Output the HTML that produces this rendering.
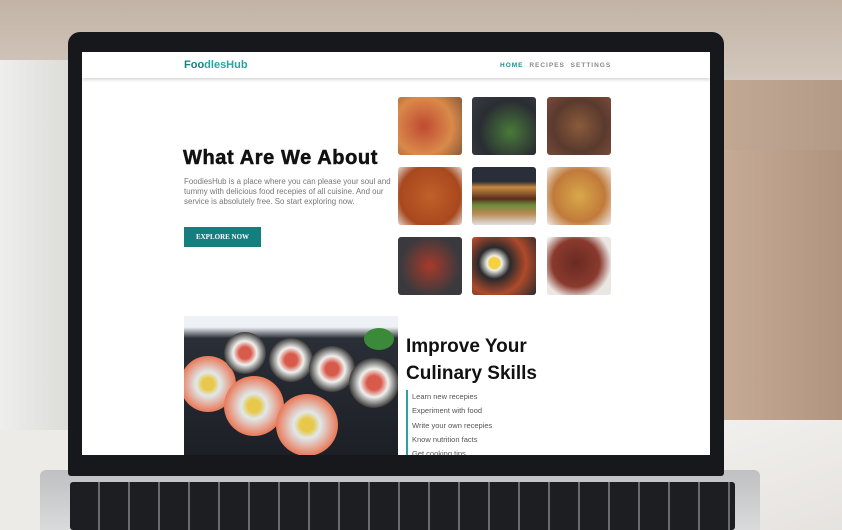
<!DOCTYPE html>
<html><head><style>
*{margin:0;padding:0;box-sizing:border-box}
body{width:842px;height:530px;overflow:hidden;position:relative;font-family:"Liberation Sans",sans-serif;
background:linear-gradient(90deg,#e4e2de 0%,#d8d4cf 8%,#cfc3b6 30%,#c9b8a6 60%,#c2a994 85%,#b39a87 100%);}
.abs{position:absolute}
.img{position:absolute;border-radius:3px;width:64px;height:58px}
</style></head><body>
<div class="abs" style="left:0;top:0;width:842px;height:80px;background:linear-gradient(180deg,#c2b3a5,#d3c8bd)"></div>
<div class="abs" style="left:0;top:60px;width:80px;height:420px;background:linear-gradient(90deg,#eeeeec,#d9d9d6)"></div>
<div class="abs" style="left:720px;top:150px;width:122px;height:300px;background:linear-gradient(90deg,#c6ab97,#b0947f)"></div>
<div class="abs" style="left:700px;top:420px;width:142px;height:110px;background:linear-gradient(160deg,#f2f0ee,#e6e3df)"></div>
<div class="abs" style="left:0;top:430px;width:100px;height:100px;background:#ecebe8"></div>
<!-- base -->
<div class="abs" style="left:40px;top:470px;width:720px;height:60px;background:linear-gradient(180deg,#bfc0c2,#d9dadb);border-radius:6px 6px 0 0"></div>
<div class="abs" style="left:70px;top:482px;width:665px;height:48px;background:#0e0f11;border-radius:3px;
background-image:repeating-linear-gradient(90deg,#1d1e21 0 28px,#6a6b6e 28px 30px),repeating-linear-gradient(180deg,transparent 0 13px,#0e0f11 13px 15px);"></div>
<!-- bezel -->
<div class="abs" style="left:68px;top:32px;width:656px;height:444px;background:#16181b;border-radius:12px 12px 3px 3px"></div>
<!-- screen -->
<div class="abs" style="left:82px;top:52px;width:628px;height:403px;background:#fff;overflow:hidden">
  <div class="abs" style="left:0;top:0;width:628px;height:26px;background:#fff;box-shadow:0 2px 3px rgba(0,0,0,.15)"></div>
  <div class="abs" style="left:102px;top:7px;font-size:11px;font-weight:bold;color:#1a7f7f">Foo<span style="color:#2aa3a3">dlesHub</span></div>
  <div class="abs" style="left:418px;top:10px;font-size:6.5px;font-weight:bold;letter-spacing:1px;color:#1a8f8f">HOME <span style="color:#888;margin-left:3px">RECIPES</span> <span style="color:#888;margin-left:3px">SETTINGS</span></div>
  <div class="abs" style="left:101px;top:95px;font-size:20px;font-weight:900;letter-spacing:0.6px;color:#111;-webkit-text-stroke:0.5px #111">What Are We About</div>
  <div class="abs" style="left:102px;top:125px;width:212px;font-size:7.9px;line-height:10px;color:#777">FoodiesHub is a place where you can please your soul and tummy with delicious food recepies of all cuisine. And our service is absolutely free. So start exploring now.</div>
  <div class="abs" style="left:102px;top:175px;width:77px;height:20px;background:#137f7f;color:#fff;font-size:7px;font-weight:bold;line-height:20px;text-align:center;font-family:'Liberation Serif',serif">EXPLORE NOW</div>
  <div class="img" style="left:316px;top:45px;background:radial-gradient(circle at 40% 50%,#c04a32,#d98a4a 60%,#8a5a3a)"></div>
  <div class="img" style="left:390px;top:45px;background:radial-gradient(circle at 60% 60%,#4a7a3a,#2a2d33 60%,#3a3c44)"></div>
  <div class="img" style="left:465px;top:45px;background:radial-gradient(circle at 50% 50%,#8a5a3a,#5a3a2e 60%,#7a4a3a)"></div>
  <div class="img" style="left:316px;top:115px;background:radial-gradient(circle,#c0602a,#a8481e 70%,#e0d8d0)"></div>
  <div class="img" style="left:390px;top:115px;background:linear-gradient(180deg,#2a2e38 0 25%,#c88a40 35%,#5a2e1e 55%,#6a8a3a 65%,#b88850 80%,#e0e0e0)"></div>
  <div class="img" style="left:465px;top:115px;background:radial-gradient(circle,#d8a84a,#c07a3a 60%,#f0ece8)"></div>
  <div class="img" style="left:316px;top:185px;background:radial-gradient(circle,#a83a2a,#3a3a3e 70%)"></div>
  <div class="img" style="left:390px;top:185px;background:radial-gradient(circle at 35% 45%,#f5d040 0 10%,#f0f0ea 14%,#2a2a2c 30%,#b04a2a 60%,#2a2a2c)"></div>
  <div class="img" style="left:465px;top:185px;background:radial-gradient(circle at 45% 45%,#6a2a22,#8a3a2e 50%,#eae6e2 75%)"></div>
  <div class="abs" style="left:102px;top:264px;width:214px;height:139px;overflow:hidden;background:linear-gradient(180deg,#eef2f6 0 8%,#2a2e36 16%,#1c1f26 100%)">
    <div class="abs" style="left:-4px;top:40px;width:56px;height:56px;border-radius:50%;background:radial-gradient(circle,#e8c84a 0 15%,#e0e8ea 30%,#e87a5a 70%)"></div>
    <div class="abs" style="left:40px;top:60px;width:60px;height:60px;border-radius:50%;background:radial-gradient(circle,#e8c84a 0 15%,#e0e8ea 30%,#e87a5a 70%)"></div>
    <div class="abs" style="left:92px;top:78px;width:62px;height:62px;border-radius:50%;background:radial-gradient(circle,#e8c84a 0 15%,#e0e8ea 30%,#e87a5a 70%)"></div>
    <div class="abs" style="left:40px;top:16px;width:42px;height:42px;border-radius:50%;background:radial-gradient(circle,#d85a4a 0 20%,#f0f0ee 40%,#222 75%)"></div>
    <div class="abs" style="left:85px;top:22px;width:44px;height:44px;border-radius:50%;background:radial-gradient(circle,#d85a4a 0 20%,#f0f0ee 40%,#222 75%)"></div>
    <div class="abs" style="left:125px;top:30px;width:46px;height:46px;border-radius:50%;background:radial-gradient(circle,#d85a4a 0 20%,#f0f0ee 40%,#222 75%)"></div>
    <div class="abs" style="left:165px;top:42px;width:50px;height:50px;border-radius:50%;background:radial-gradient(circle,#d85a4a 0 20%,#f0f0ee 40%,#222 75%)"></div>
    <div class="abs" style="left:180px;top:12px;width:30px;height:22px;border-radius:50%;background:#3a8a3a"></div>
  </div>
  <div class="abs" style="left:324px;top:281px;font-size:19px;font-weight:bold;line-height:27px;color:#111">Improve Your<br>Culinary Skills</div>
  <div class="abs" style="left:324px;top:338px;font-size:7.5px;line-height:14.3px;color:#555">
    <div style="border-left:2px solid #2aa3a3;padding-left:4px">Learn new recepies</div>
    <div style="border-left:2px solid #2aa3a3;padding-left:4px">Experiment with food</div>
    <div style="border-left:2px solid #2aa3a3;padding-left:4px">Write your own recepies</div>
    <div style="border-left:2px solid #2aa3a3;padding-left:4px">Know nutrition facts</div>
    <div style="border-left:2px solid #2aa3a3;padding-left:4px">Get cooking tips</div>
  </div>
</div>
</body></html>
